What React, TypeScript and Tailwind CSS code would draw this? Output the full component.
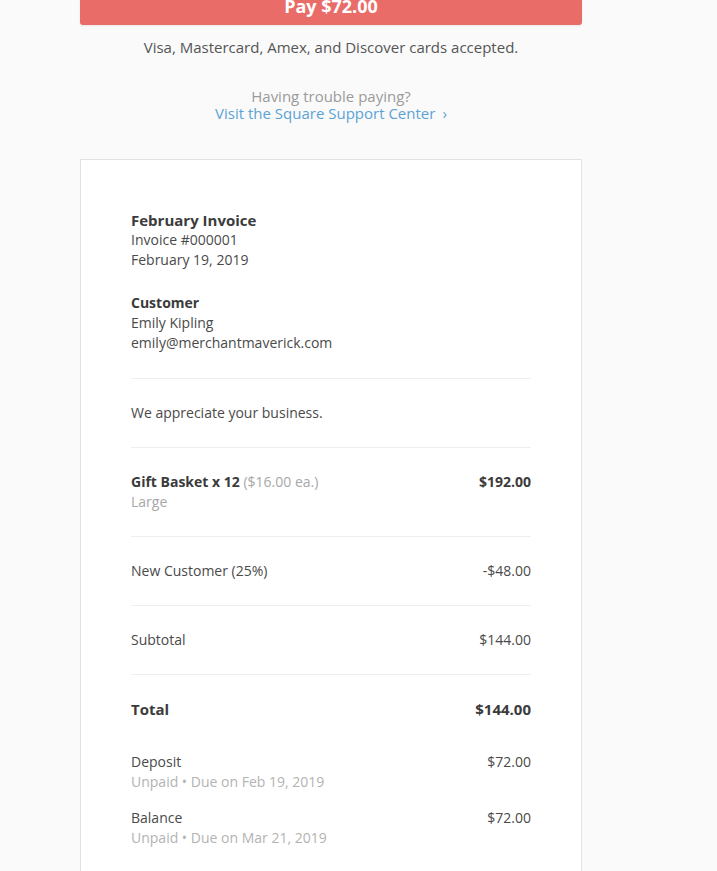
import React from 'react';

type Row = { label: React.ReactNode; sub?: string; amount: string; bold?: boolean };

const lineItems: Row[] = [
  {
    label: (
      <>
        <span className="font-bold text-[#3b3b3b]">Gift Basket x 12</span>{' '}
        <span className="text-[#a8a8a8]">($16.00 ea.)</span>
      </>
    ),
    sub: 'Large',
    amount: '$192.00',
    bold: true,
  },
  { label: 'New Customer (25%)', amount: '-$48.00' },
  { label: 'Subtotal', amount: '$144.00' },
];

const payments = [
  { label: 'Deposit', due: 'Unpaid • Due on Feb 19, 2019', amount: '$72.00' },
  { label: 'Balance', due: 'Unpaid • Due on Mar 21, 2019', amount: '$72.00' },
];

export default function App() {
  return (
    <div className="min-h-screen w-full bg-[#fafafa] font-['Open_Sans',sans-serif] text-[14px] leading-[20px] text-[#4a4a4a] flex flex-col overflow-hidden">
      <div className="ml-[80px] w-[502px] flex flex-col">
        {/* Pay button */}
        <button className="-mt-[13px] h-[38px] w-full rounded-[3px] bg-[#e96c69] text-white text-[18px] leading-[24px] font-bold shadow-[0_1px_2px_rgba(0,0,0,0.08)]">
          Pay $72.00
        </button>

        <p className="mt-[12px] text-center text-[15px] text-[#555]">
          Visa, Mastercard, Amex, and Discover cards accepted.
        </p>

        <div className="mt-[31px] text-center text-[15px] leading-[17px]">
          <p className="text-[#9a9a9a]">Having trouble paying?</p>
          <a className="text-[#5ba3d6]">
            Visit the Square Support Center<span className="ml-[7px]">›</span>
          </a>
        </div>

        {/* Invoice card */}
        <div className="mt-[37px] bg-white border border-[#e2e2e2] px-[50px] pt-[50px] pb-[40px]">
          <div className="pb-[25px] border-b border-[#eeeeee]">
            <h2 className="font-bold text-[15px] text-[#3b3b3b]">February Invoice</h2>
            <p>Invoice #000001</p>
            <p>February 19, 2019</p>
            <h3 className="mt-[23px] font-bold text-[#3b3b3b]">Customer</h3>
            <p>Emily Kipling</p>
            <p>emily@merchantmaverick.com</p>
          </div>

          <div className="py-[24px] border-b border-[#eeeeee]">
            <p>We appreciate your business.</p>
          </div>

          {lineItems.map((row, i) => (
            <div key={i} className="py-[24px] border-b border-[#eeeeee] flex justify-between">
              <div>
                <p>{row.label}</p>
                {row.sub && <p className="text-[#a8a8a8]">{row.sub}</p>}
              </div>
              <p className={row.bold ? 'font-bold text-[#3b3b3b]' : ''}>{row.amount}</p>
            </div>
          ))}

          <div className="pt-[24px] flex justify-between font-bold text-[15px] text-[#3b3b3b]">
            <p>Total</p>
            <p>$144.00</p>
          </div>

          <div className="mt-[33px] flex flex-col gap-[16px]">
            {payments.map((p) => (
              <div key={p.label} className="flex justify-between">
                <div>
                  <p>{p.label}</p>
                  <p className="text-[#b3b3b3]">{p.due}</p>
                </div>
                <p>{p.amount}</p>
              </div>
            ))}
          </div>
        </div>
      </div>
    </div>
  );
}
